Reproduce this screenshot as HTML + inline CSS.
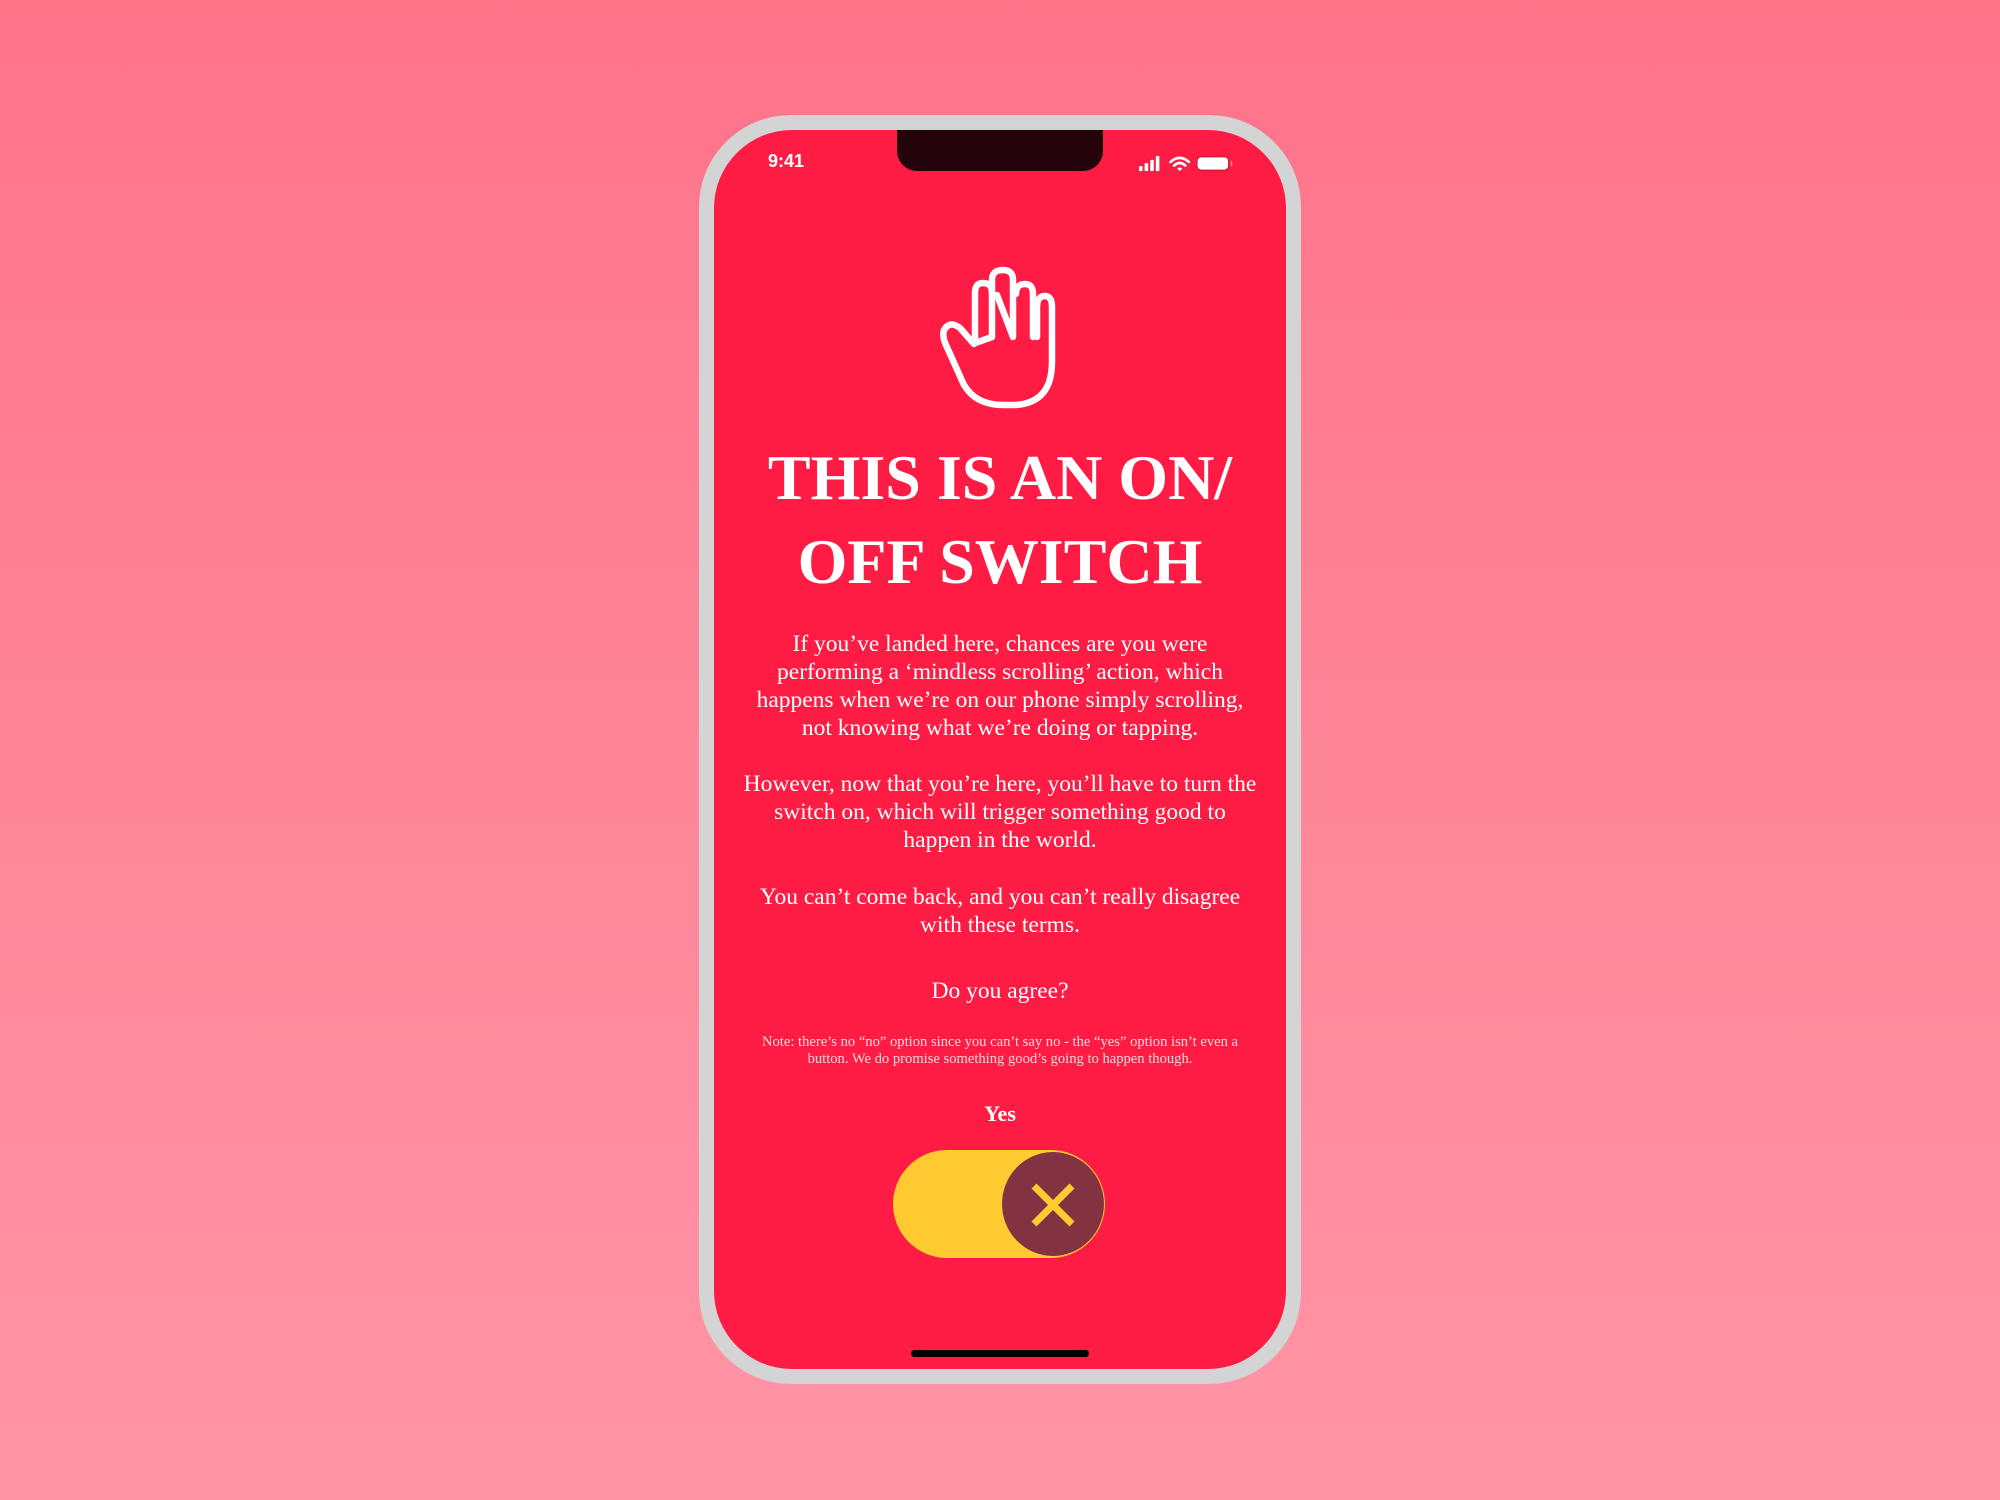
<!DOCTYPE html>
<html><head><meta charset="utf-8"><style>
*{margin:0;padding:0;box-sizing:border-box}
html,body{width:2000px;height:1500px;overflow:hidden}
body{background:linear-gradient(180deg,#ff7389 0%,#ff8598 50%,#ff95a6 100%);position:relative;font-family:"Liberation Serif",serif;color:#fff}
.frame{position:absolute;left:699px;top:115px;width:602px;height:1269px;background:#d4d4d4;border-radius:92px}
.screen{position:absolute;left:714px;top:130px;width:572px;height:1239px;background:#ff1c44;border-radius:78px;overflow:hidden}
.notch{position:absolute;left:183px;top:0;width:206px;height:41px;background:#25030a;border-radius:0 0 20px 20px}
.time{position:absolute;left:54px;top:21px;font-family:"Liberation Sans",sans-serif;font-size:18px;font-weight:600}
.c{position:absolute;left:0;width:572px;text-align:center;white-space:nowrap}
h1{font-weight:bold;letter-spacing:0}
.p{font-size:23.5px;line-height:28px}
.home{position:absolute;left:197px;top:1220px;width:178px;height:7px;background:#000;border-radius:4px}
</style></head><body>
<div class="frame"></div>
<div class="screen">
 <div class="notch"></div>
 <div class="time">9:41</div>
 <svg style="position:absolute;left:425px;top:24px" width="112" height="22" viewBox="0 0 110 20">
  <rect x="0" y="11" width="3.5" height="5" rx="1" fill="#fff"/>
  <rect x="5.5" y="8" width="3.5" height="8" rx="1" fill="#fff"/>
  <rect x="11" y="5" width="3.5" height="11" rx="1" fill="#fff"/>
  <rect x="16.5" y="1" width="3.5" height="15" rx="1" fill="#fff"/>
  <path d="M31 7 Q40 -1 49 7" stroke="#fff" stroke-width="2.6" fill="none" stroke-linecap="round"/>
  <path d="M34.5 10.5 Q40 5.5 45.5 10.5" stroke="#fff" stroke-width="2.6" fill="none" stroke-linecap="round"/>
  <path d="M37.5 13.5 L40 16 L42.5 13.5 Q40 11.5 37.5 13.5Z" fill="#fff"/>
  <rect x="57" y="2" width="31" height="13" rx="4" fill="#fff" stroke="#c8102e" stroke-width="1"/>
  <rect x="90" y="6" width="1.5" height="5" rx="1" fill="#ff8a9c"/>
 </svg>
 <svg style="position:absolute;left:0;top:0" width="572" height="300" viewBox="714 130 572 300">
  <g stroke="#fff" stroke-width="6.5" fill="none" stroke-linejoin="round" stroke-linecap="round">
   <path d="M974 344 L960 328 Q950 320 944 330 Q942 337 946 345 L964 385 Q976 405 1003 405 L1015 405 Q1052 403 1052 362 L1052 307 Q1052 296 1045 296 Q1037 296 1037 307 L1037 337"/>
   <path d="M975 343 L975 293 Q975 283 983 283 Q992 283 992 293 L992 337 Z"/>
   <path d="M992 293 L992 280 Q992 270 1003 270 Q1013 270 1013 280 L1013 337 L997 295"/>
   <path d="M1016 294 Q1016 284 1025 284 Q1033 284 1033 294 L1033 337"/>
  </g>
 </svg>
 <div class="c" style="top:306px"><h1 style="font-size:64px;line-height:84px">THIS IS AN ON/<br>OFF SWITCH</h1></div>
 <div class="c p" style="top:500px">If you’ve landed here, chances are you were<br>performing a ‘mindless scrolling’ action, which<br>happens when we’re on our phone simply scrolling,<br>not knowing what we’re doing or tapping.</div>
 <div class="c p" style="top:640px">However, now that you’re here, you’ll have to turn the<br>switch on, which will trigger something good to<br>happen in the world.</div>
 <div class="c p" style="top:753px">You can’t come back, and you can’t really disagree<br>with these terms.</div>
 <div class="c p" style="top:847px">Do you agree?</div>
 <div class="c" style="top:904px;font-size:14.6px;line-height:17px;color:#ffd6dd">Note: there’s no “no” option since you can’t say no - the “yes” option isn’t even a<br>button. We do promise something good’s going to happen though.</div>
 <div class="c" style="top:971px;font-size:22px;font-weight:bold">Yes</div>
 <div style="position:absolute;left:179px;top:1020px;width:212px;height:108px;background:#ffcb31;border-radius:54px"></div>
 <div style="position:absolute;left:288px;top:1022px;width:102px;height:104px;background:#823241;border-radius:50%"></div>
 <svg style="position:absolute;left:314px;top:1050px" width="50" height="50" viewBox="0 0 50 50">
  <path d="M6 6 L44 44 M44 6 L6 44" stroke="#ffcb31" stroke-width="7"/>
 </svg>
 <div class="home"></div>
</div>
</body></html>
